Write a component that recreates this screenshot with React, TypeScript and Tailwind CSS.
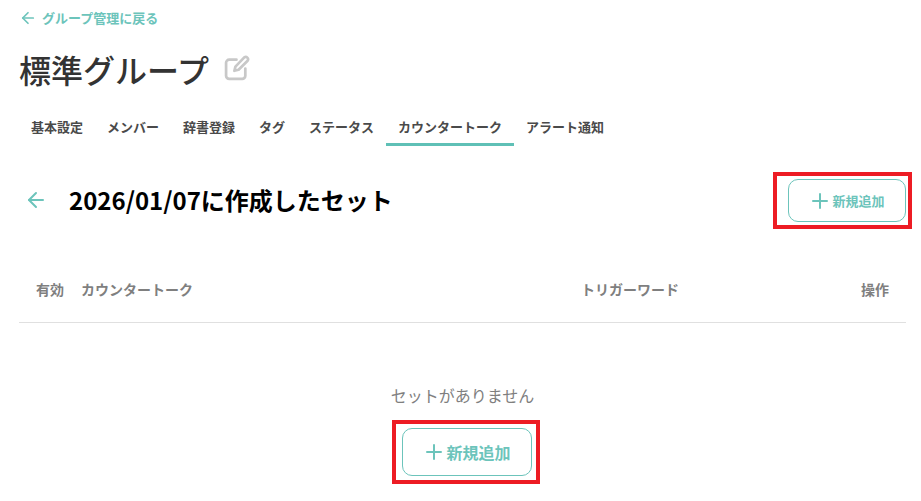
import React from "react";
import { ArrowLeft, Plus } from "lucide-react";

const TABS = ["基本設定", "メンバー", "辞書登録", "タグ", "ステータス", "カウンタートーク", "アラート通知"];

function AddButton({ large }: { large?: boolean }) {
  return (
    <div className={large ? "border-4 border-[#ed1c24] py-[4px] pl-[6px] pr-[4px]" : "border-4 border-[#ed1c24] py-[3px] pl-[11px] pr-[2px]"}>
      <button
        className={
          large
            ? "flex h-[48px] w-[130px] items-center justify-center rounded-[10px] border border-[#6cc4bb] pr-[1px] text-[16px] font-bold text-[#6cc4bb]"
            : "flex h-[43px] w-[118px] items-center justify-center rounded-[10px] border border-[#6cc4bb] pr-[1px] text-[13px] font-bold text-[#6cc4bb]"
        }
      >
        <Plus size={24} strokeWidth={2} />
        新規追加
      </button>
    </div>
  );
}

export default function App() {
  return (
    <div className="h-[501px] w-[921px] overflow-hidden bg-white pl-[19px] pr-[15px] font-['Noto_Sans_CJK_JP',sans-serif]">
      <a className="flex h-[36px] items-center gap-[5px] text-[13px] font-bold text-[#6cc4bb]">
        <ArrowLeft size={18} strokeWidth={2.25} />
        グループ管理に戻る
      </a>

      <div className="mt-[10px] flex h-[46px] items-center gap-[15px]">
        <h1 className="text-[32px] leading-[46px] font-medium text-[#333333]">標準グループ</h1>
        <svg width="26" height="26" viewBox="0 0 25 25" fill="none" stroke="#c8c8c8" strokeWidth="2.6" strokeLinecap="round" strokeLinejoin="round" className="mt-[-2px]">
          <path d="M12 4.5H5a3 3 0 0 0-3 3V20a3 3 0 0 0 3 3h12.5a3 3 0 0 0 3-3v-7" />
          <path d="M19.5 2.3a2.3 2.3 0 0 1 3.2 3.2L14 14.2l-4 1 1-4z" />
        </svg>
      </div>

      <div className="mt-[18px] flex h-[38px]">
        {TABS.map((tab) => (
          <div
            key={tab}
            className={
              tab === "カウンタートーク"
                ? "flex h-[36px] items-center border-b-[3px] border-[#5fc0b6] px-[12px] text-[13px] font-bold text-[#4a4a4a]"
                : "flex h-[36px] items-center border-b-[3px] border-transparent px-[12px] text-[13px] font-bold text-[#4a4a4a]"
            }
          >
            {tab}
          </div>
        ))}
      </div>

      <div className="mt-[24px] flex h-[57px] items-center justify-between">
        <div className="flex items-center pb-[2px]">
          <ArrowLeft size={24} strokeWidth={2} className="ml-[5px] text-[#6cc4bb]" />
          <h2 className="ml-[21px] text-[24px] font-bold text-black">2026/01/07に作成したセット</h2>
        </div>
        <div className="-mr-[6px]">
          <AddButton />
        </div>
      </div>

      <div className="mt-[30px] flex h-[64px] items-center border-b border-[#e0e0e0] pb-[2px] text-[14px] font-bold text-[#7f7f7f]">
        <div className="ml-[17px] w-[45px]">有効</div>
        <div className="w-[500px]">カウンタートーク</div>
        <div className="flex-1">トリガーワード</div>
        <div className="pr-[17px]">操作</div>
      </div>

      <div className="flex flex-col items-center">
        <p className="mt-[60px] text-[16px] leading-[24px] text-[#7f7f7f]">セットがありません</p>
        <div className="ml-[7px] mt-[13px]">
          <AddButton large />
        </div>
      </div>
    </div>
  );
}
